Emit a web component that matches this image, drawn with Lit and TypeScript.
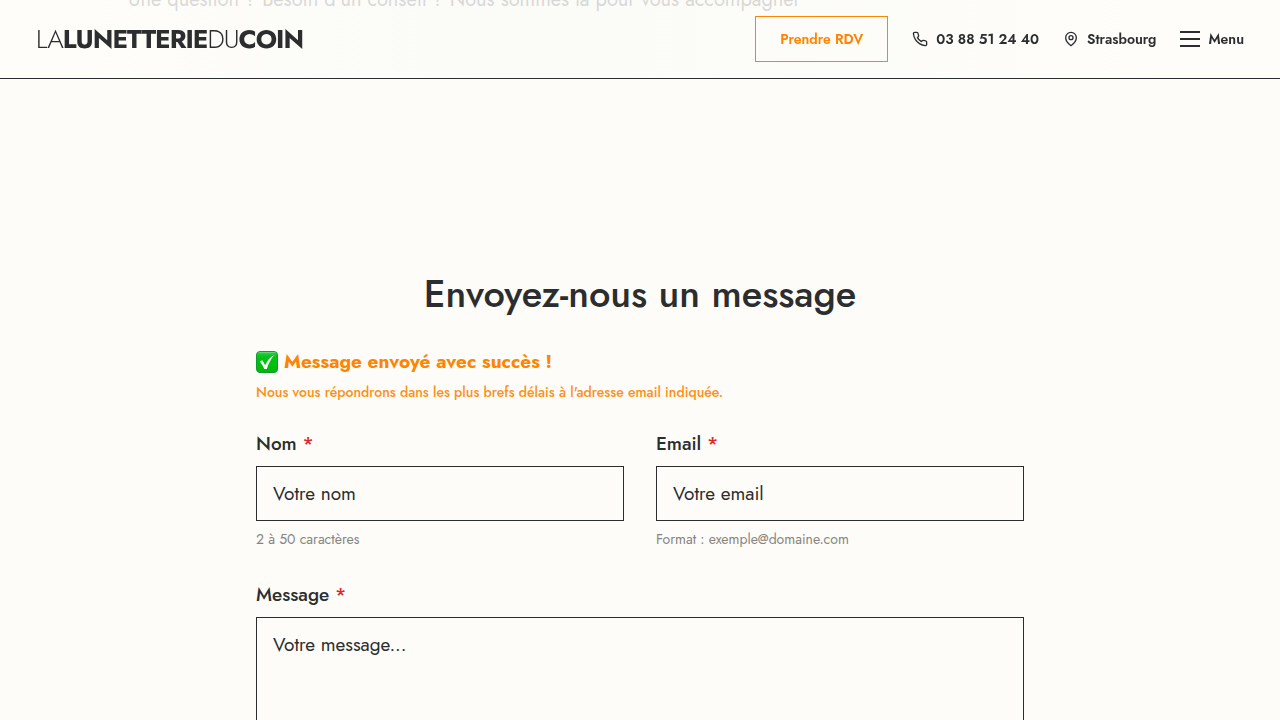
import { LitElement, html, css } from "lit";
import { customElement } from "lit/decorators.js";

@customElement("app-root")
export class AppRoot extends LitElement {
  static styles = css`
    :host {
      --ink: #2b2d2f;
      --paper: #fefcf8;
      --accent: #ff8500;
      display: block;
      height: 100vh;
      overflow-y: auto;
      scrollbar-width: none;
      background: var(--paper);
      color: var(--ink);
      font-family: Jost, Lato, sans-serif;
      font-size: 19px;
      line-height: 28px;
    }
    * {
      box-sizing: border-box;
    }
    .header {
      position: fixed;
      inset: 0 0 auto 0;
      z-index: 1;
      display: flex;
      align-items: center;
      justify-content: space-between;
      padding: 16px 36px;
      border-bottom: 1px solid var(--ink);
      background: linear-gradient(90deg, #fefdf9d4, #fafaf7d4 40%, #fefdf9d4);
    }
    .logo {
      color: inherit;
      text-decoration: none;
      font-size: 26px;
      font-weight: 300;
      letter-spacing: -1px;
    }
    .logo b {
      font-weight: 700;
    }
    .nav {
      display: flex;
      align-items: center;
      gap: 24px;
      font-size: 14px;
      font-weight: 600;
      line-height: 20px;
    }
    .cta,
    .link {
      display: flex;
      align-items: center;
      gap: 8px;
      padding: 0;
      border: 0;
      background: none;
      color: inherit;
      font: inherit;
      text-decoration: none;
      cursor: pointer;
    }
    .cta {
      padding: 12px 24px;
      border: 1px solid var(--accent);
      color: var(--accent);
    }
    .intro {
      margin: -14px 10% 0;
      color: #2b2d2f;
      font-weight: 400;
      font-size: 20px;
    }
    .contact {
      width: 60%;
      margin: 0 auto;
      padding: 254px 0 64px;
    }
    .title {
      margin: 0 0 28px;
      text-align: center;
      font-size: 38px;
      font-weight: 500;
      line-height: 52px;
    }
    .status {
      margin-bottom: 24px;
      color: var(--accent);
    }
    .success {
      display: flex;
      align-items: center;
      gap: 6px;
      margin: 0;
      font-weight: 700;
    }
    .detail {
      margin: 2px 0 0;
      font-size: 14px;
      font-weight: 500;
      opacity: 0.9;
    }
    .form {
      display: grid;
      grid-template-columns: 1fr 1fr;
      gap: 32px;
    }
    .field {
      display: flex;
      flex-direction: column;
    }
    .wide {
      grid-column: 1 / -1;
    }
    .label {
      margin-bottom: 8px;
      font-weight: 500;
    }
    .star {
      color: #dc2626;
    }
    .control {
      width: 100%;
      padding: 13px 16px;
      border: 1px solid var(--ink);
      border-radius: 0;
      background: transparent;
      color: inherit;
      font: inherit;
      line-height: 27px;
      resize: none;
    }
    .control::placeholder {
      color: var(--ink);
      opacity: 1;
    }
    .hint {
      margin-top: 8px;
      color: #85857f;
      font-size: 14px;
      line-height: 20px;
    }
  `;

  render() {
    return html`
      <header class="header">
        <a class="logo" href="#">LA<b>LUNETTERIE</b>DU<b>COIN</b></a>
        <nav class="nav">
          <button class="cta" type="button">Prendre RDV</button>
          <a class="link" href="tel:+33388512440">
            <svg width="16" height="16" viewBox="0 0 24 24" fill="none" stroke="currentColor" stroke-width="2" stroke-linecap="round" stroke-linejoin="round" aria-hidden="true">
              <path d="M22 16.92v3a2 2 0 0 1-2.18 2 19.79 19.79 0 0 1-8.63-3.07 19.5 19.5 0 0 1-6-6 19.79 19.79 0 0 1-3.07-8.67A2 2 0 0 1 4.11 2h3a2 2 0 0 1 2 1.72 12.84 12.84 0 0 0 .7 2.81 2 2 0 0 1-.45 2.11L8.09 9.91a16 16 0 0 0 6 6l1.27-1.27a2 2 0 0 1 2.11-.45 12.84 12.84 0 0 0 2.81.7A2 2 0 0 1 22 16.92z" />
            </svg>
            03 88 51 24 40
          </a>
          <a class="link" href="#strasbourg">
            <svg width="16" height="16" viewBox="0 0 24 24" fill="none" stroke="currentColor" stroke-width="2" stroke-linecap="round" stroke-linejoin="round" aria-hidden="true">
              <path d="M20 10c0 6-8 12-8 12s-8-6-8-12a8 8 0 0 1 16 0Z" />
              <circle cx="12" cy="10" r="3" />
            </svg>
            Strasbourg
          </a>
          <button class="link" type="button">
            <svg width="20" height="16" viewBox="0 0 20 16" fill="currentColor" aria-hidden="true">
              <path d="M0 0h20v2H0zM0 7h20v2H0zM0 14h20v2H0z" />
            </svg>
            Menu
          </button>
        </nav>
      </header>
      <main>
        <p class="intro">Une question ? Besoin d'un conseil ? Nous sommes là pour vous accompagner</p>
        <section class="contact">
          <h2 class="title">Envoyez-nous un message</h2>
          <div class="status" role="status">
            <p class="success">
              <svg width="22" height="22" viewBox="0 0 22 22" role="img" aria-label="Succès">
                <defs>
                  <linearGradient id="tile" x2="0" y2="1">
                    <stop offset="0" stop-color="#2fc84a" />
                    <stop offset="0.3" stop-color="#00c414" />
                    <stop offset="1" stop-color="#00b908" />
                  </linearGradient>
                </defs>
                <rect x="0.5" y="0.5" width="21" height="21" rx="3.5" fill="url(#tile)" stroke="#129b2c" />
                <path d="M3 1.7h16" stroke="#7be08a" stroke-width="0.8" stroke-linecap="round" />
                <path d="M3.800 10.500 6.300 9.300 9.200 14.200C11 10 13.700 6.500 18.300 4 14.800 8 12.500 12.500 10.800 18H8.300C7 15 5.800 12.800 3.800 10.500Z" fill="#fff" />
              </svg>
              Message envoyé avec succès !
            </p>
            <p class="detail">Nous vous répondrons dans les plus brefs délais à l'adresse email indiquée.</p>
          </div>
          <form class="form">
            <div class="field">
              <label class="label" for="name">Nom <span class="star">*</span></label>
              <input class="control" id="name" type="text" placeholder="Votre nom" />
              <span class="hint">2 à 50 caractères</span>
            </div>
            <div class="field">
              <label class="label" for="email">Email <span class="star">*</span></label>
              <input class="control" id="email" type="email" placeholder="Votre email" />
              <span class="hint">Format : exemple@domaine.com</span>
            </div>
            <div class="field wide">
              <label class="label" for="message">Message <span class="star">*</span></label>
              <textarea class="control" id="message" rows="6" placeholder="Votre message..."></textarea>
            </div>
          </form>
        </section>
      </main>
    `;
  }
}
